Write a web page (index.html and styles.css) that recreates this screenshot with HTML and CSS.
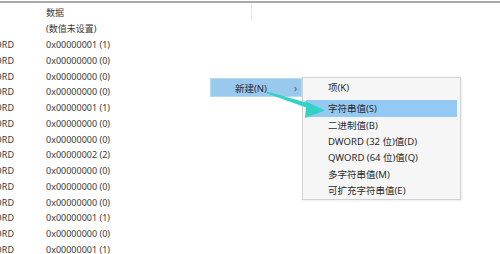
FILE: index.html
```html
<!DOCTYPE html>
<html lang="zh-CN">
<head>
<meta charset="utf-8">
<title>注册表编辑器</title>
<link rel="stylesheet" href="styles.css">
</head>
<body>
<div class="list">
  <div class="rule"></div>
  <div class="row head"><span class="type"></span><span class="data">数据</span></div>
  <div class="row"><span class="type"></span><span class="data">(数值未设置)</span></div>
  <div class="row"><span class="type"><span>REG_DWORD</span></span><span class="data">0x00000001 (1)</span></div>
  <div class="row"><span class="type"><span>REG_DWORD</span></span><span class="data">0x00000000 (0)</span></div>
  <div class="row"><span class="type"><span>REG_DWORD</span></span><span class="data">0x00000000 (0)</span></div>
  <div class="row"><span class="type"><span>REG_DWORD</span></span><span class="data">0x00000000 (0)</span></div>
  <div class="row"><span class="type"><span>REG_DWORD</span></span><span class="data">0x00000001 (1)</span></div>
  <div class="row"><span class="type"><span>REG_DWORD</span></span><span class="data">0x00000000 (0)</span></div>
  <div class="row"><span class="type"><span>REG_DWORD</span></span><span class="data">0x00000000 (0)</span></div>
  <div class="row"><span class="type"><span>REG_DWORD</span></span><span class="data">0x00000002 (2)</span></div>
  <div class="row"><span class="type"><span>REG_DWORD</span></span><span class="data">0x00000000 (0)</span></div>
  <div class="row"><span class="type"><span>REG_DWORD</span></span><span class="data">0x00000000 (0)</span></div>
  <div class="row"><span class="type"><span>REG_DWORD</span></span><span class="data">0x00000000 (0)</span></div>
  <div class="row"><span class="type"><span>REG_DWORD</span></span><span class="data">0x00000001 (1)</span></div>
  <div class="row"><span class="type"><span>REG_DWORD</span></span><span class="data">0x00000000 (0)</span></div>
  <div class="row"><span class="type"><span>REG_DWORD</span></span><span class="data">0x00000001 (1)</span></div>
</div>

<div class="menu main-menu">
  <div class="item active"><span class="label">新建(N)</span><span class="chev">›</span></div>
</div>

<div class="menu sub-menu">
  <div class="item">项(K)</div>
  <div class="sep"></div>
  <div class="item active">字符串值(S)</div>
  <div class="item">二进制值(B)</div>
  <div class="item">DWORD (32 位)值(D)</div>
  <div class="item">QWORD (64 位)值(Q)</div>
  <div class="item">多字符串值(M)</div>
  <div class="item">可扩充字符串值(E)</div>
</div>

<svg class="arrow" width="80" height="40" viewBox="260 85 80 40" aria-hidden="true">
  <polygon points="267,91.5 306,102.5 303,100 325,110.5 305,118 306,107.5 267,93.5" fill="#33d2c6"/>
</svg>
</body>
</html>
```

FILE: styles.css
```css
html, body {
  margin: 0;
  padding: 0;
  background: #ffffff;
}

body {
  width: 500px;
  height: 254px;
  overflow: hidden;
  position: relative;
  font-family: "Noto Sans", "Noto Sans CJK SC", sans-serif;
  color: #3a3a3a;
}

.list {
  display: flex;
  flex-direction: column;
  padding-top: 1px;
}

.rule {
  height: 2px;
  background: #a9a9a9;
}

.row {
  display: flex;
  align-items: center;
  height: 15.75px;
  font-size: 9px;
  white-space: nowrap;
}

.row.head {
  height: 17px;
  padding-top: 1px;
  align-items: stretch;
}

.type {
  width: 14px;
  flex: none;
  overflow: hidden;
  display: flex;
  justify-content: flex-end;
}

.data {
  margin-left: 32px;
}

.head .data {
  width: 205px;
  display: flex;
  align-items: center;
  border-right: 1px solid #e6e6e6;
}

.menu {
  position: absolute;
  font-family: "Noto Sans", "Noto Sans CJK SC", sans-serif;
  font-size: 9.5px;
  color: #2a2a2a;
  white-space: nowrap;
}

.main-menu {
  left: 210px;
  top: 78px;
  width: 92px;
  height: 19px;
  display: flex;
}

.main-menu .item {
  flex: 1;
  display: flex;
  align-items: center;
  background: #99c9ef;
  border: 1px solid #b5d8f3;
  padding-left: 24px;
  padding-right: 4px;
}

.main-menu .label {
  flex: 1;
}

.main-menu .chev {
  font-size: 10px;
  color: #555;
}

.sub-menu {
  left: 302px;
  top: 77px;
  width: 159px;
  box-sizing: border-box;
  background: #f6f6f6;
  border: 1px solid #d2d2d2;
  padding: 1px 3px 1px 3px;
  display: flex;
  flex-direction: column;
  box-shadow: 1px 1px 2px rgba(0, 0, 0, 0.08);
}

.sub-menu .item {
  height: 16.3px;
  display: flex;
  align-items: center;
  padding-left: 22px;
}

.sub-menu .item.active {
  background: #94c9f3;
}

.sub-menu .sep {
  height: 5px;
}

.arrow {
  position: absolute;
  left: 260px;
  top: 85px;
}
```
